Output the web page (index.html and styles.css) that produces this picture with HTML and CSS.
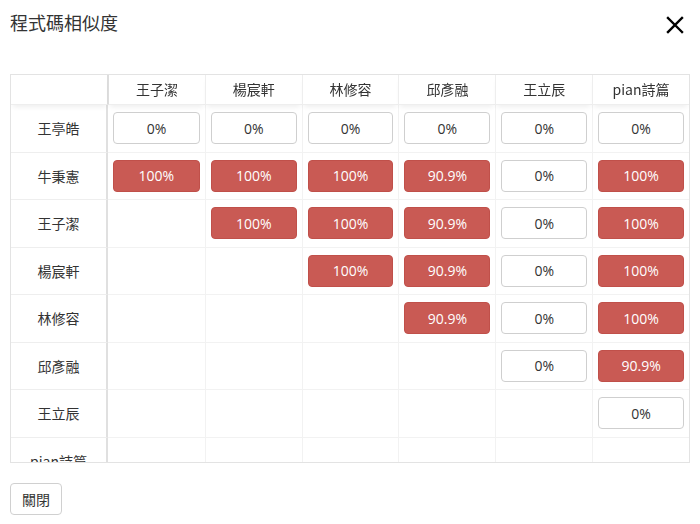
FILE: index.html
```html
<!DOCTYPE html>
<html lang="zh-Hant">
<head>
<meta charset="utf-8">
<title>程式碼相似度</title>
<link rel="stylesheet" href="styles.css">
</head>
<body>
<div class="dialog">
  <div class="dialog-header">
    <h1 class="dialog-title">程式碼相似度</h1>
    <button class="close-btn" aria-label="close">
      <svg width="18" height="18" viewBox="0 0 18 18"><path d="M2 2 L16 16 M16 2 L2 16" stroke="#000" stroke-width="2.4" stroke-linecap="square" fill="none"/></svg>
    </button>
  </div>
  <div class="table-wrap">
    <table class="sim-table">
      <thead>
        <tr>
          <th class="corner"></th>
          <th>王子潔</th><th>楊宸軒</th><th>林修容</th><th>邱彥融</th><th>王立辰</th><th>pian詩篇</th>
        </tr>
      </thead>
      <tbody>
        <tr>
          <th class="row-label">王亭皓</th>
          <td><span class="cell">0%</span></td><td><span class="cell">0%</span></td><td><span class="cell">0%</span></td><td><span class="cell">0%</span></td><td><span class="cell">0%</span></td><td><span class="cell">0%</span></td>
        </tr>
        <tr>
          <th class="row-label">牛秉憲</th>
          <td><span class="cell high">100%</span></td><td><span class="cell high">100%</span></td><td><span class="cell high">100%</span></td><td><span class="cell high">90.9%</span></td><td><span class="cell">0%</span></td><td><span class="cell high">100%</span></td>
        </tr>
        <tr>
          <th class="row-label">王子潔</th>
          <td></td><td><span class="cell high">100%</span></td><td><span class="cell high">100%</span></td><td><span class="cell high">90.9%</span></td><td><span class="cell">0%</span></td><td><span class="cell high">100%</span></td>
        </tr>
        <tr>
          <th class="row-label">楊宸軒</th>
          <td></td><td></td><td><span class="cell high">100%</span></td><td><span class="cell high">90.9%</span></td><td><span class="cell">0%</span></td><td><span class="cell high">100%</span></td>
        </tr>
        <tr>
          <th class="row-label">林修容</th>
          <td></td><td></td><td></td><td><span class="cell high">90.9%</span></td><td><span class="cell">0%</span></td><td><span class="cell high">100%</span></td>
        </tr>
        <tr>
          <th class="row-label">邱彥融</th>
          <td></td><td></td><td></td><td></td><td><span class="cell">0%</span></td><td><span class="cell high">90.9%</span></td>
        </tr>
        <tr>
          <th class="row-label">王立辰</th>
          <td></td><td></td><td></td><td></td><td></td><td><span class="cell">0%</span></td>
        </tr>
        <tr>
          <th class="row-label">pian詩篇</th>
          <td></td><td></td><td></td><td></td><td></td><td></td>
        </tr>
      </tbody>
    </table>
  </div>
  <div class="dialog-footer">
    <button class="btn">關閉</button>
  </div>
</div>
</body>
</html>
```

FILE: styles.css
```css
html, body {
  margin: 0;
  padding: 0;
  background: #fff;
}
body {
  font-family: "Open Sans", "Noto Sans CJK TC", sans-serif;
  color: #333;
}
.dialog {
  width: 700px;
  height: 524px;
  box-sizing: border-box;
  padding: 0 10px;
}
.dialog-header {
  display: flex;
  align-items: center;
  justify-content: space-between;
  height: 44px;
  margin-bottom: 30px;
}
.dialog-title {
  margin: 0;
  font-family: "Noto Sans CJK TC", sans-serif;
  font-size: 18px;
  font-weight: 400;
  color: #333;
  line-height: 24px;
}
.close-btn {
  background: none;
  border: none;
  padding: 0;
  margin-right: 6px;
  margin-top: 5px;
  width: 18px;
  height: 18px;
  display: flex;
  cursor: pointer;
}
.table-wrap {
  width: 680px;
  height: 389px;
  box-sizing: border-box;
  border: 1px solid #e3e3e3;
  overflow: auto;
  scrollbar-width: none;
}
.table-wrap::-webkit-scrollbar { display: none; }
.sim-table {
  width: 100%;
  border-collapse: separate;
  border-spacing: 0;
  table-layout: fixed;
  font-size: 14px;
}
.sim-table th, .sim-table td {
  padding: 0;
  text-align: center;
  font-weight: 400;
  color: #333;
}
.sim-table thead th {
  position: sticky;
  top: 0;
  height: 28px;
  background: #fff;
  border-bottom: 1px solid #eee;
  border-left: 1px solid #eee;
  box-shadow: 0 4px 5px -2px rgba(0,0,0,0.07);
  z-index: 2;
  font-family: "Noto Sans CJK TC", sans-serif;
  line-height: 29px;
}
.sim-table thead th.corner {
  width: 96px;
  border-left: none;
  border-right: 1px solid #ddd;
}
.sim-table thead th:nth-child(2) {
  border-left: 1px solid #ddd;
}
.sim-table tbody tr {
  height: 47.5px;
}
.sim-table tbody th.row-label {
  font-family: "Noto Sans CJK TC", sans-serif;
  border-right: 2px solid #e0e0e0;
  border-bottom: 1px solid #eee;
}
.sim-table tbody td {
  border-bottom: 1px solid #f2f2f2;
  border-left: 1px solid #f2f2f2;
  padding: 0 5px;
}
.sim-table tbody td:nth-child(2) {
  border-left: none;
}
.cell {
  display: flex;
  align-items: center;
  justify-content: center;
  height: 32px;
  box-sizing: border-box;
  border: 1px solid #cfcfcf;
  border-radius: 4px;
  background: #fff;
  color: #333;
  font-size: 14px;
}
.cell.high {
  background: #c95a54;
  border-color: #c0504a;
  color: #fff;
}
.dialog-footer {
  padding-top: 20px;
}
.btn {
  font-family: "Noto Sans CJK TC", sans-serif;
  font-size: 14px;
  color: #333;
  background: #fff;
  border: 1px solid #d0d0d0;
  border-radius: 4px;
  width: 52px;
  height: 32px;
  padding: 0;
}
```
